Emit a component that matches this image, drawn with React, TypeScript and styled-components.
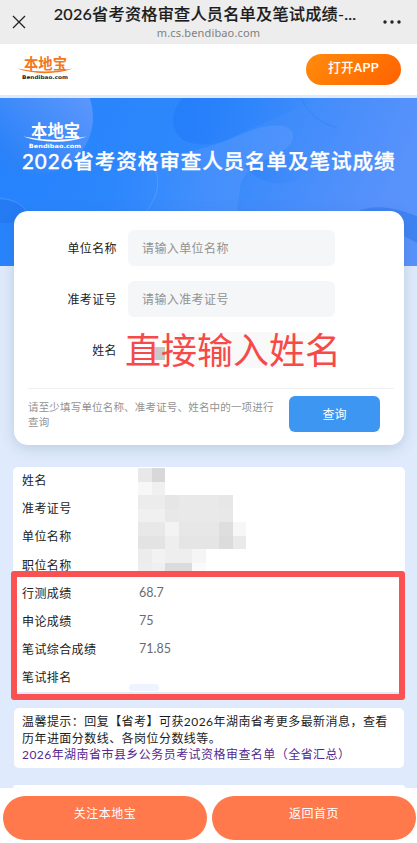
import React from "react";
import styled, { createGlobalStyle, css } from "styled-components";

const GlobalStyle = createGlobalStyle`
  * {
    box-sizing: border-box;
  }
  body {
    margin: 0;
    font-family: Lato, "Noto Sans CJK SC", sans-serif;
    color: #1c1c1c;
  }
`;

const Page = styled.div`
  display: flex;
  flex-direction: column;
  width: 417px;
  height: 843px;
  overflow: hidden;
  background: #dfebfc;
`;

const NavBar = styled.header`
  display: flex;
  align-items: center;
  justify-content: space-between;
  height: 44px;
  padding: 0 16px 0 12px;
  background: #ededed;
`;

const NavText = styled.div`
  display: flex;
  flex-direction: column;
  align-items: center;
  margin-left: 1px;
`;

const NavTitle = styled.h1`
  margin: -3px 0 0;
  font-size: 16.2px;
  font-weight: 500;
  line-height: 24px;
  letter-spacing: 0.2px;
  white-space: nowrap;
  -webkit-text-stroke: 0.15px #1c1c1c;
`;

const NavUrl = styled.span`
  margin: 0 0 0 7px;
  font-family: "Noto Sans", sans-serif;
  font-size: 11px;
  line-height: 14px;
  letter-spacing: 0.15px;
  color: #808080;
`;

const SiteBar = styled.div`
  display: flex;
  justify-content: space-between;
  height: 54px;
  padding: 10px 16px 0 16px;
  background: #fff;
  border-bottom: 3px solid #dfeafa;
`;

const OpenApp = styled.button`
  width: 95px;
  height: 31px;
  padding: 0 0 4px;
  border: 0;
  border-radius: 16px;
  background: linear-gradient(135deg, #ff8c0c, #ff6200);
  color: #fff;
  font: 500 12.7px/27px Roboto, "Noto Sans CJK SC", sans-serif;
  letter-spacing: 0.2px;
`;

const Main = styled.main`
  position: relative;
  flex: 1;
  display: flex;
  flex-direction: column;
  padding: 22px 12px 0 13px;
`;

const BannerArt = styled.svg`
  position: absolute;
  top: 0;
  left: 0;
`;

const BannerHead = styled.div`
  position: relative;
  height: 91px;
  padding-left: 9px;
  color: #fff;
  svg {
    display: block;
  }
`;

const BannerTitle = styled.h2`
  margin: -1px 0 0;
  font-size: 20.6px;
  font-weight: 500;
  line-height: 25px;
  letter-spacing: 0.88px;
  white-space: nowrap;
  -webkit-text-stroke: 0.3px #fff;
`;

const SearchCard = styled.form`
  position: relative;
  height: 234px;
  margin: 0 1px 0 1px;
  padding: 19px 10px 0 14px;
  border-radius: 14px;
  background: #fff;
  box-shadow: 0 3px 14px rgba(60, 90, 130, 0.22);
`;

const Field = styled.label`
  display: flex;
  align-items: center;
  height: 36px;
  margin-bottom: 15px;
  font-size: 12px;
  letter-spacing: 0.4px;
`;

const FieldName = styled.span`
  width: 89px;
  margin: 0 11px 1px 0;
  text-align: right;
`;

const Input = styled.input<{ $cleared?: boolean }>`
  width: 207px;
  height: 36px;
  padding: 0 14px;
  border: 0;
  border-radius: 6px;
  background: #f5f6f7;
  font: inherit;
  letter-spacing: inherit;
  &::placeholder {
    color: #929292;
    opacity: 1;
  }
  ${(p) =>
    p.$cleared &&
    css`
      background: linear-gradient(90deg, #fff, #f8f8f8 60%, #fcfcfc);
    `}
`;

const NameSmudge = styled.i`
  position: absolute;
  left: 137px;
  top: 136px;
  width: 14px;
  height: 13px;
  background: #c9c9c9;
`;

const Scrawl = styled.span`
  position: absolute;
  left: 111px;
  top: 111px;
  font-family: "Noto Sans CJK SC", sans-serif;
  font-size: 36px;
  font-weight: 400;
  line-height: 52px;
  white-space: nowrap;
  color: #f64a48;
`;

const SearchFoot = styled.div`
  display: flex;
  height: 50px;
  margin-top: 20px;
  border-top: 1px solid #f0f0f0;
`;

const Fields = styled.div`
  height: 138px;
`;

const Hint = styled.p`
  width: 250px;
  margin: 11px 11px 0 0;
  font-size: 10.5px;
  line-height: 14.5px;
  letter-spacing: 0.18px;
  color: #929292;
`;

const QueryButton = styled.button`
  width: 91px;
  height: 36px;
  margin-top: 7px;
  padding: 0 0 2px;
  border: 0;
  border-radius: 6px;
  background: #3d96f2;
  color: #fff;
  font: 400 12px "Noto Sans CJK SC", sans-serif;
`;

const ResultCard = styled.section`
  position: relative;
  height: 225px;
  margin-top: 22px;
  border-radius: 5px;
  background: #fff;
`;

const ResultList = styled.dl`
  margin: 0;
`;

const ResultRow = styled.div`
  display: grid;
  grid-template-columns: 117px 1fr;
  height: 28.2px;
  padding: 0 0 3px 9px;
  align-items: center;
  font-size: 12px;
  letter-spacing: 0.4px;
  dd {
    margin: 0;
    color: #6b6b6b;
    font-size: 12.5px;
    letter-spacing: 0;
  }
`;

const Mosaic = styled.div`
  position: absolute;
  left: 125px;
  top: 1px;
  display: grid;
  grid-template-columns: repeat(8, 13.5px);
  grid-auto-rows: 13.5px;
`;

const Cell = styled.i<{ $tone: string }>`
  background: ${(p) => p.$tone};
`;

const RankSmudge = styled.i`
  position: absolute;
  left: 116px;
  bottom: 1px;
  width: 30px;
  height: 7px;
  border-radius: 5px;
  background: #edf4ff;
`;

const RedFrame = styled.div`
  position: absolute;
  left: -2px;
  top: 104px;
  width: 394px;
  height: 129px;
  border: 6px solid #fa5253;
  border-radius: 3px;
`;

const TipCard = styled.section`
  height: 60px;
  margin: 16px 1px 0 1px;
  padding: 6px 8px 0;
  border-radius: 5px;
  background: #fff;
  font-size: 12px;
  line-height: 16.7px;
  letter-spacing: 0.45px;
  white-space: nowrap;
  p {
    margin: 0;
  }
  a {
    display: block;
    color: #55298f;
    text-decoration: none;
  }
`;

const NextCard = styled.section`
  flex: 1;
  margin-top: 17px;
  border-radius: 5px 5px 0 0;
  background: #fff;
`;

const BottomBar = styled.footer`
  display: grid;
  grid-template-columns: 204px 204px;
  gap: 5px;
  height: 55px;
  padding: 8px 2px 3px 3px;
  background: #fff;
`;

const BottomButton = styled.button`
  padding: 0 0 11px;
  border: 0;
  border-radius: 22px;
  background: #ff794d;
  color: #fff;
  font: 400 12px "Noto Sans CJK SC", sans-serif;
  letter-spacing: 0.5px;
`;

interface LogoProps {
  width: number;
  main: string;
  sub: string;
}

function Logo({ width, main, sub }: LogoProps): React.ReactElement {
  return (
    <svg
      width={width}
      height={(width * 26) / 58}
      viewBox="0 0 58 26"
      overflow="visible"
    >
      <text
        x="8"
        y="14.6"
        fill={main}
        fontFamily="Noto Sans CJK SC, sans-serif"
        fontSize="14.5"
        fontWeight="700"
        textLength="43"
        lengthAdjust="spacingAndGlyphs"
      >
        本地宝
      </text>
      <path d="M1 14.6Q29 20.4 57 14.6Q44 19.2 29 19.2Q13 19 1 14.6Z" fill={main} />
      <text
        x="6"
        y="25"
        fill={sub}
        fontFamily="DejaVu Sans, sans-serif"
        fontSize="5"
        fontWeight="700"
        textLength="46"
        lengthAdjust="spacingAndGlyphs"
      >
        Bendibao.com
      </text>
    </svg>
  );
}

function Banner(): React.ReactElement {
  return (
    <BannerArt width="417" height="168" viewBox="0 0 417 168">
      <defs>
        <linearGradient id="sky" x1="0" y1="0" x2="1" y2="0.2">
          <stop offset="0" stopColor="#2482fc" />
          <stop offset="0.5" stopColor="#2f88fc" />
          <stop offset="1" stopColor="#5892fb" />
        </linearGradient>
        <linearGradient id="orb" x1="0" y1="1" x2="1" y2="0">
          <stop offset="0.2" stopColor="#2b82f8" />
          <stop offset="1" stopColor="#6a9dfd" />
        </linearGradient>
        <linearGradient id="hill" x1="0" y1="0" x2="1" y2="0">
          <stop offset="0" stopColor="#4a92fd" stopOpacity="0" />
          <stop offset="0.6" stopColor="#4a92fd" />
          <stop offset="1" stopColor="#5496fc" />
        </linearGradient>
        <linearGradient id="drop" x1="0" y1="0" x2="1" y2="0">
          <stop offset="0" stopColor="#2079f8" />
          <stop offset="1" stopColor="#2079f8" stopOpacity="0" />
        </linearGradient>
      </defs>
      <rect width="417" height="168" fill="url(#sky)" />
      <circle cx="36" cy="19" r="57" fill="url(#orb)" />
      <path
        d="M182 0C168 18 172 36 185 43C202 50 220 46 235 38L320 0Z"
        fill="url(#drop)"
        opacity="0.6"
      />
      <path
        d="M110 168V70C150 60 200 55 235 39C262 26 292 22 293 38C294 58 243 62 240 90C237 110 236 122 232 130V168Z"
        fill="url(#hill)"
        opacity="0.75"
      />
      <path
        d="M244 68Q262 88 285 85Q305 82 314 62Q285 52 244 68Z"
        fill="url(#drop)"
        opacity="0.35"
      />
      <path
        d="M0 102Q22 101 31 120L14 125H0ZM346 119Q370 103 402 113L417 118V145L404 138Z"
        fill="#2272e9"
        opacity="0.45"
      />
      <g fill="none" stroke="#73adff" strokeWidth="0.8" opacity="0.5">
        <path d="M0 100Q20 102 28 115M144 116Q165 92 154 68" />
        <path d="M301 0Q311 23 337 30" stroke="#2878ed" />
      </g>
    </BannerArt>
  );
}

const fields = [
  { name: "单位名称", placeholder: "请输入单位名称" },
  { name: "准考证号", placeholder: "请输入准考证号" },
  { name: "姓名", placeholder: "" },
];

const results = [
  ["姓名", ""],
  ["准考证号", ""],
  ["单位名称", ""],
  ["职位名称", ""],
  ["行测成绩", "68.7"],
  ["申论成绩", "75"],
  ["笔试综合成绩", "71.85"],
  ["笔试排名", ""],
];

// grey level of every mosaic cell, row by row
const mosaic = [
  "e8 d8 ff ff ff ff ff ff",
  "f7 f0 ff ff ff ff ff ff",
  "ec ec e6 e9 e9 e9 e7 ff",
  "f0 f0 e8 e9 e9 e9 e8 ff",
  "e8 e8 f3 e7 e7 e7 de f7",
  "e3 e3 ee e5 e5 e5 dc ea",
  "ec f2 ee ee f5 ff ff ff",
  "ed ef db db fa ff ff ff",
];

export default function App(): React.ReactElement {
  return (
    <>
      <GlobalStyle />
      <Page>
        <NavBar>
          <svg width="14" height="14" viewBox="0 0 14 14">
            <path d="M1 1L13 13M13 1L1 13" stroke="#222" strokeWidth="1.3" />
          </svg>
          <NavText>
            <NavTitle>2026省考资格审查人员名单及笔试成绩-...</NavTitle>
            <NavUrl>m.cs.bendibao.com</NavUrl>
          </NavText>
          <svg width="18" height="4" viewBox="0 0 18 4">
            <circle cx="2" cy="2" r="1.7" fill="#222" />
            <circle cx="9" cy="2" r="1.7" fill="#222" />
            <circle cx="16" cy="2" r="1.7" fill="#222" />
          </svg>
        </NavBar>
        <SiteBar>
          <Logo width={58} main="#f47721" sub="#222" />
          <OpenApp>打开APP</OpenApp>
        </SiteBar>
        <Main>
          <Banner />
          <BannerHead>
            <Logo width={66} main="#fff" sub="#fff" />
            <BannerTitle>2026省考资格审查人员名单及笔试成绩</BannerTitle>
          </BannerHead>
          <SearchCard>
            <Fields>
              {fields.map((item) => (
                <Field key={item.name}>
                  <FieldName>{item.name}</FieldName>
                  <Input
                    placeholder={item.placeholder}
                    $cleared={!item.placeholder}
                  />
                </Field>
              ))}
            </Fields>
            <NameSmudge />
            <Scrawl>直接输入姓名</Scrawl>
            <SearchFoot>
              <Hint>请至少填写单位名称、准考证号、姓名中的一项进行查询</Hint>
              <QueryButton type="button">查询</QueryButton>
            </SearchFoot>
          </SearchCard>
          <ResultCard>
            <ResultList>
              {results.map(([name, value]) => (
                <ResultRow key={name}>
                  <dt>{name}</dt>
                  <dd>{value}</dd>
                </ResultRow>
              ))}
            </ResultList>
            <Mosaic>
              {mosaic
                .join(" ")
                .split(" ")
                .map((v, idx) => (
                  <Cell key={idx} $tone={`#${v}${v}${v}`} />
                ))}
            </Mosaic>
            <RankSmudge />
            <RedFrame />
          </ResultCard>
          <TipCard>
            <p>
              温馨提示：回复【省考】可获2026年湖南省考更多最新消息，查看
              <br />
              历年进面分数线、各岗位分数线等。
            </p>
            <a href="#">2026年湖南省市县乡公务员考试资格审查名单（全省汇总）</a>
          </TipCard>
          <NextCard />
        </Main>
        <BottomBar>
          <BottomButton>关注本地宝</BottomButton>
          <BottomButton>返回首页</BottomButton>
        </BottomBar>
      </Page>
    </>
  );
}
